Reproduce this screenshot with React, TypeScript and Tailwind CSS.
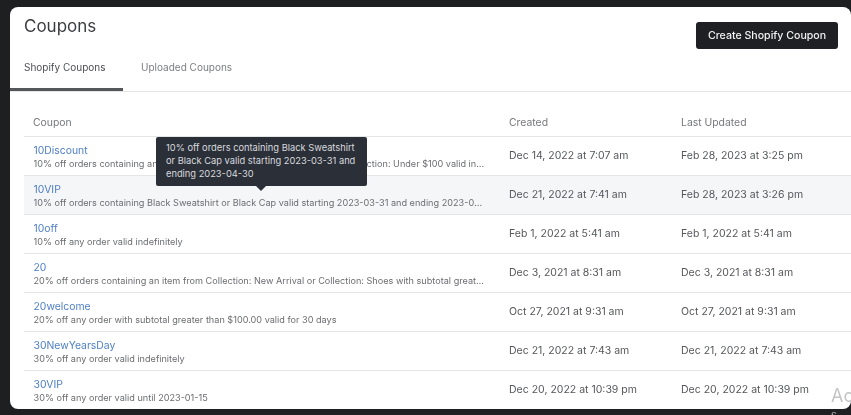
const rows = [
  { name: "10Discount", desc: "10% off orders containing an item from Collection: Black Friday Sales or Collection: Under $100 valid indefinitely", created: "Dec 14, 2022 at 7:07 am", updated: "Feb 28, 2023 at 3:25 pm" },
  { name: "10VIP", desc: "10% off orders containing Black Sweatshirt or Black Cap valid starting 2023-03-31 and ending 2023-04-30", created: "Dec 21, 2022 at 7:41 am", updated: "Feb 28, 2023 at 3:26 pm", hover: true },
  { name: "10off", desc: "10% off any order valid indefinitely", created: "Feb 1, 2022 at 5:41 am", updated: "Feb 1, 2022 at 5:41 am" },
  { name: "20", desc: "20% off orders containing an item from Collection: New Arrival or Collection: Shoes with subtotal greater than $100.00", created: "Dec 3, 2021 at 8:31 am", updated: "Dec 3, 2021 at 8:31 am" },
  { name: "20welcome", desc: "20% off any order with subtotal greater than $100.00 valid for 30 days", created: "Oct 27, 2021 at 9:31 am", updated: "Oct 27, 2021 at 9:31 am" },
  { name: "30NewYearsDay", desc: "30% off any order valid indefinitely", created: "Dec 21, 2022 at 7:43 am", updated: "Dec 21, 2022 at 7:43 am" },
  { name: "30VIP", desc: "30% off any order valid until 2023-01-15", created: "Dec 20, 2022 at 10:39 pm", updated: "Dec 20, 2022 at 10:39 pm" },
];

export default function App() {
  return (
    <div className="h-[415px] w-[851px] overflow-hidden bg-[#1e1f21]">
      <div className="relative h-[415px] w-[851px] pl-[10px] pt-[7px] font-['Inter',sans-serif] blur-[0.35px]">
        <div className="h-[402px] w-[841px] overflow-hidden rounded-[8px] bg-white">
          <div className="flex h-[85px] flex-col justify-between border-b border-[#e4e5e7]">
            <div className="flex items-start justify-between pl-[14px] pr-[13px]">
              <h1 className="mt-[6px] text-[17px] leading-[26px] text-[#3a3c40]">Coupons</h1>
              <button className="mt-[15px] h-[27px] w-[142px] rounded-[3px] bg-[#1f2023] text-[10.6px] font-medium text-[#f1f1f1]">
                Create Shopify Coupon
              </button>
            </div>
            <div className="flex text-[10px] leading-[14px]">
              <div className="w-[113px] border-b-[3px] border-[#54565a] pb-[14px] pl-[14px] text-[#4c4e52]">Shopify Coupons</div>
              <div className="pl-[18px] text-[#7b7d81]">Uploaded Coupons</div>
            </div>
          </div>
          <div className="ml-[14px]">
            <div className="grid h-[45px] grid-cols-[476px_172px_1fr] items-end border-b border-[#e4e5e7] pb-[6px] pl-[9px] text-[10.4px] leading-[14px] text-[#76787c]">
              <div>Coupon</div>
              <div>Created</div>
              <div>Last Updated</div>
            </div>
            {rows.map((r) => (
              <div
                key={r.name}
                className={`grid h-[39px] grid-cols-[476px_172px_1fr] items-center border-b border-[#e4e5e7] pl-[9px] ${r.hover ? "bg-[#f5f6f8]" : ""}`}
              >
                <div className="min-w-0 pl-[0.5px] pt-[1px]">
                  <div className="text-[10.4px] leading-[13px] text-[#4f7fc4]">{r.name}</div>
                  <div className="w-[452px] truncate text-[9.15px] leading-[13px] text-[#6b6d71]">{r.desc}</div>
                </div>
                <div className="text-[10.5px] text-[#55575b]">{r.created}</div>
                <div className="text-[10.5px] text-[#55575b]">{r.updated}</div>
              </div>
            ))}
          </div>
        </div>
        <div className="absolute left-[156px] top-[137px] h-[49px] w-[211px] rounded-[2px] bg-[#2b2f38] px-[10px] py-[4px] text-[9.3px] leading-[13px] text-[#d8dade]">
          10% off orders containing Black Sweatshirt or Black Cap valid starting 2023-03-31 and ending 2023-04-30
          <div className="absolute left-[100px] top-[49px] h-0 w-0 border-x-[5px] border-t-[5px] border-x-transparent border-t-[#2b2f38]" />
        </div>
        <div className="absolute left-[831px] top-[385px] text-[18px] leading-[22px] text-[#c4c5c7]">Ac</div>
        <div className="absolute left-[831px] top-[411px] text-[9px] leading-[10px] text-[#b8b9bb]">S</div>
      </div>
    </div>
  );
}
